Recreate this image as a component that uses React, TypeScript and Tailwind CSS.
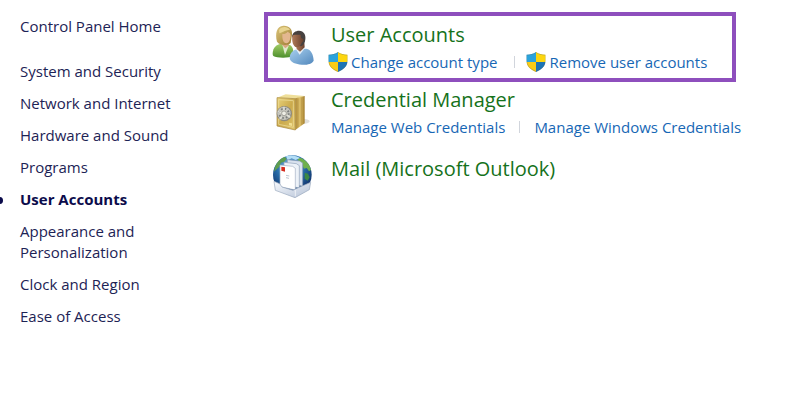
import type { ReactNode } from 'react';

interface Task {
  label: string;
  shield?: boolean;
}

interface Category {
  title: string;
  icon: ReactNode;
  tasks: Task[];
  highlighted?: boolean;
}

const NAV_ITEMS = [
  'System and Security',
  'Network and Internet',
  'Hardware and Sound',
  'Programs',
  'User Accounts',
  'Appearance and Personalization',
  'Clock and Region',
  'Ease of Access',
];

const ACTIVE_ITEM = 'User Accounts';

function ShieldIcon() {
  return (
    <svg viewBox="0 0 58 58" className="w-5 h-5 shrink-0" aria-hidden="true">
      <defs>
        <clipPath id="shield">
          <path d="M29 0C22 5 12 8 1 8V25C1 41 13 52 29 58C45 52 57 41 57 25V8C46 8 36 5 29 0Z" />
        </clipPath>
      </defs>
      <g clipPath="url(#shield)">
        <path fill="#2ba3dc" d="M0 0H29V29H0Z" />
        <path fill="#fdd60f" d="M29 0H58V29H29Z" />
        <path fill="#f9cc16" d="M0 29H29V58H0Z" />
        <path fill="#1d74b5" d="M29 29H58V58H29Z" />
        <path
          fill="none"
          stroke="#52605a"
          strokeOpacity="0.35"
          strokeWidth="4"
          d="M29 0C22 5 12 8 1 8V25C1 41 13 52 29 58C45 52 57 41 57 25V8C46 8 36 5 29 0Z"
        />
      </g>
    </svg>
  );
}

function UsersIcon() {
  return (
    <svg viewBox="36 39 132 144" className="w-11 h-12" aria-hidden="true">
      <defs>
        <linearGradient id="green" x1="0" y1="0" x2="0" y2="1">
          <stop offset="0" stopColor="#a5cf68" />
          <stop offset="1" stopColor="#4d8f2e" />
        </linearGradient>
        <linearGradient id="blue" x1="0" y1="0" x2="1" y2="1">
          <stop offset="0" stopColor="#a9d0ee" />
          <stop offset="1" stopColor="#5288bd" />
        </linearGradient>
        <linearGradient id="blonde" x1="0" y1="0" x2="1" y2="1">
          <stop offset="0" stopColor="#dcc67c" />
          <stop offset="1" stopColor="#9c7a30" />
        </linearGradient>
        <linearGradient id="skin" x1="0" y1="0" x2="1" y2="0">
          <stop offset="0" stopColor="#b07a59" />
          <stop offset="1" stopColor="#68402d" />
        </linearGradient>
      </defs>
      <path fill="url(#green)" d="M38 136C39 119 48 109 65 107L88 110C97 114 101 122 101 144C84 151 50 150 40 144C38 142 38 139 38 136Z" />
      <path fill="#dfe9cc" d="M67 110L75 141L86 114Z" />
      <path fill="#d9a680" d="M65 98L84 100L87 112L76 121L64 108Z" />
      <path fill="url(#blonde)" d="M51 101C45 76 50 54 70 53C87 52 98 63 96 80L92 105C84 114 58 112 51 101Z" />
      <path fill="#e3b78f" d="M67 78C72 79 79 75 83 71C87 74 92 75 92 82C91 98 87 106 79 106C70 105 66 94 67 78Z" />
      <path fill="#e8d490" d="M57 66C65 54 83 55 90 65C78 65 70 72 58 76Z" />
      <path fill="url(#blue)" d="M89 151C90 134 98 126 114 123L139 122C153 125 160 138 161 158C155 169 139 171 125 170C108 169 91 164 89 151Z" />
      <path fill="#e6f0f8" d="M107 123L119 140L135 120L122 115Z" />
      <path fill="url(#skin)" d="M108 111L133 105L134 118L120 131L110 123Z" />
      <path fill="#47413f" d="M96 86C97 74 107 68 117 68C132 69 138 80 136 94C135 106 130 113 122 115Z" />
      <path fill="url(#skin)" d="M97 83C102 78 112 81 122 80C122 87 123 92 129 92C132 94 130 102 126 103C123 112 117 118 110 118C99 115 95 101 97 83Z" />
    </svg>
  );
}

function SafeIcon() {
  return (
    <svg viewBox="36 3 132 144" className="w-11 h-12" aria-hidden="true">
      <defs>
        <linearGradient id="door" x1="0" y1="0" x2="1" y2="1">
          <stop offset="0" stopColor="#e8d27c" />
          <stop offset="0.5" stopColor="#cbaa4c" />
          <stop offset="1" stopColor="#dfc46b" />
        </linearGradient>
        <linearGradient id="side" x1="0" y1="0" x2="1" y2="0">
          <stop offset="0" stopColor="#ae8935" />
          <stop offset="0.5" stopColor="#dfc26c" />
          <stop offset="1" stopColor="#a27c2a" />
        </linearGradient>
      </defs>
      <ellipse cx="125" cy="109" rx="24" ry="8" fill="#e0dfdb" />
      <path fill="#efdf9a" d="M51 38L77 28L134 33L106 41Z" />
      <path fill="url(#side)" d="M106 40L134 33V115L106 135Z" />
      <path fill="url(#door)" stroke="#a5833a" strokeWidth="2" d="M51 38L106 41V135L51 123Z" />
      <path fill="none" stroke="#f0e1a0" strokeWidth="2" d="M56 44L100 47V127L56 118Z" />
      <path stroke="#a5833a" strokeWidth="1" d="M114 42V127M124 39V120" />
      <circle cx="73" cy="86" r="23" fill="#8d897c" />
      <circle cx="72" cy="85" r="20" fill="#c5c5bd" />
      <circle cx="72" cy="85" r="14" fill="none" stroke="#7d7f7d" strokeWidth="6" strokeDasharray="5 6" />
      <circle cx="72" cy="85" r="7" fill="#eeeee5" stroke="#8c8b83" strokeWidth="2" />
      <path stroke="#e2e2d9" strokeWidth="4" d="M72 65V76M54 80L63 83M81 90L91 97M65 95L59 103" />
      <path fill="#f1df91" d="M87 113L96 115V123L87 121Z" />
    </svg>
  );
}

function MailIcon() {
  return (
    <svg viewBox="36 27 132 144" className="w-11 h-12" aria-hidden="true">
      <defs>
        <radialGradient id="globe" cx="0.45" cy="0.3" r="0.7">
          <stop offset="0" stopColor="#8fc7ed" />
          <stop offset="0.5" stopColor="#286eaa" />
          <stop offset="1" stopColor="#0d2a62" />
        </radialGradient>
        <linearGradient id="tray" x1="0" y1="0" x2="1" y2="1">
          <stop offset="0" stopColor="#f9fbfe" />
          <stop offset="1" stopColor="#b4c1d6" />
        </linearGradient>
      </defs>
      <circle cx="97" cy="86" r="58" fill="url(#globe)" />
      <path fill="#5f9d4e" d="M45 64C50 49 61 37 74 33L80 38L73 47L63 50L58 62L50 70L42 77Z" />
      <path fill="#6fb04c" d="M112 37L123 36C139 43 150 57 153 72L147 76L140 66L132 68L126 56L117 50Z" />
      <path fill="#3b8844" d="M134 80L144 83L149 94L143 104L134 98Z" />
      <path fill="#b4def6" d="M78 31C92 26 111 29 120 36L107 42L95 37L83 43Z" />
      <path fill="#d9e2ee" stroke="#8396b0" strokeWidth="2" d="M82 41L119 45L128 51V121L82 110Z" />
      <path fill="#edf2f8" stroke="#91a3ba" strokeWidth="2" d="M72 49L109 53L118 59V126L72 116Z" />
      <path fill="#fff" stroke="#a1afc2" strokeWidth="2" d="M60 57L98 61L106 67V132L60 122Z" />
      <path fill="#d62d20" d="M64 62L75 64V77L64 74Z" />
      <path stroke="#bcc5d1" strokeWidth="3" d="M78 88L88 90M78 95L87 97" />
      <path fill="url(#tray)" stroke="#98a7bd" strokeWidth="2" d="M42 106L59 113L66 123L99 133L108 128L152 109L148 131L105 155L46 133Z" />
      <path stroke="#fff" strokeWidth="2" d="M106 132V151" />
    </svg>
  );
}

const CATEGORIES: Category[] = [
  {
    title: 'User Accounts',
    icon: <UsersIcon />,
    highlighted: true,
    tasks: [
      { label: 'Change account type', shield: true },
      { label: 'Remove user accounts', shield: true },
    ],
  },
  {
    title: 'Credential Manager',
    icon: <SafeIcon />,
    tasks: [{ label: 'Manage Web Credentials' }, { label: 'Manage Windows Credentials' }],
  },
  {
    title: 'Mail (Microsoft Outlook)',
    icon: <MailIcon />,
    tasks: [],
  },
];

function Sidebar() {
  return (
    <nav className="w-[264px] shrink-0 pt-4 pl-5 text-[15px] leading-[21px] text-[#1d2355]">
      <a href="#home">Control Panel Home</a>
      <ul className="mt-6 flex flex-col gap-[11px]">
        {NAV_ITEMS.map((item) => {
          const active = item === ACTIVE_ITEM;
          return (
            <li key={item} className="relative max-w-40">
              {active && (
                <span className="absolute -left-6 top-2 size-[7px] rounded-full bg-[#0b0b4b]" />
              )}
              <a href="#category" className={active ? 'font-bold text-[#0b0b4b]' : ''}>
                {item}
              </a>
            </li>
          );
        })}
      </ul>
    </nav>
  );
}

function CategoryRow({ title, icon, tasks, highlighted }: Category) {
  return (
    <section
      className={`flex gap-[15px] ${
        highlighted
          ? 'max-w-[472px] border-4 border-[#8e4fbd] pt-[5px] pb-[3px] pl-1 mb-1'
          : 'pl-2 mb-[15px]'
      }`}
    >
      <div className="shrink-0">{icon}</div>
      <div>
        <h2 className="text-[20px] leading-7 text-[#16721b]">
          <a href="#open">{title}</a>
        </h2>
        {tasks.length > 0 && (
          <ul className="flex text-[15px] leading-[26px] whitespace-nowrap text-[#1767b5]">
            {tasks.map((task, i) => (
              <li key={task.label} className="flex items-center">
                {i > 0 && <span className="mx-[14px] h-3 w-px bg-gray-300" />}
                <a href="#task" className={task.shield ? '-ml-[3px] flex items-center gap-[3px] pr-[3px]' : ''}>
                  {task.shield && <ShieldIcon />}
                  {task.label}
                </a>
              </li>
            ))}
          </ul>
        )}
      </div>
    </section>
  );
}

export default function App() {
  return (
    <div className="flex min-h-screen bg-white font-['Open_Sans','Segoe_UI',sans-serif]">
      <Sidebar />
      <main className="min-w-0 flex-1 pt-3">
        {CATEGORIES.map((category) => (
          <CategoryRow key={category.title} {...category} />
        ))}
      </main>
    </div>
  );
}
